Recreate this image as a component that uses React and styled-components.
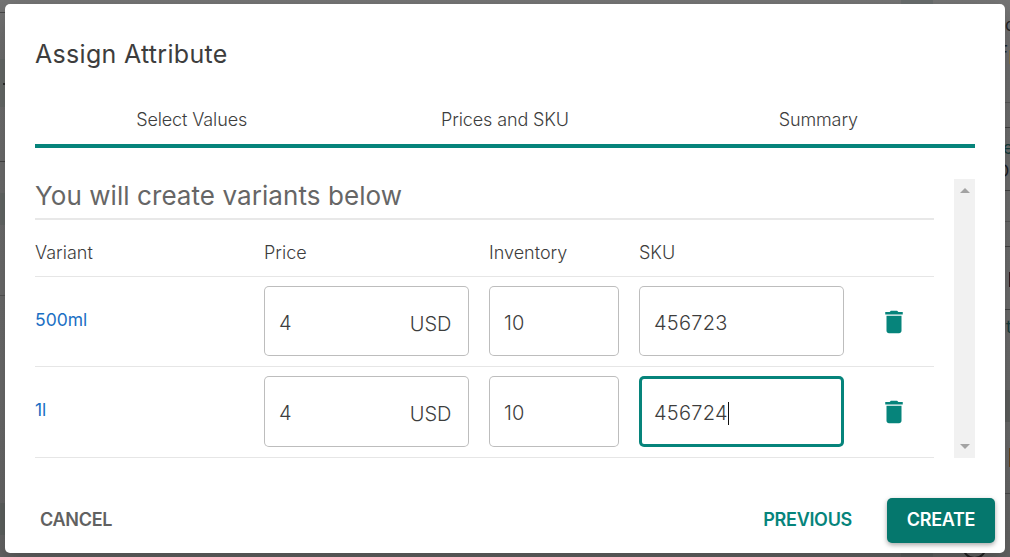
import React from "react";
import styled, { createGlobalStyle, css } from "styled-components";

const teal = "#06847b";

const GlobalStyle = createGlobalStyle`
  * { box-sizing: border-box; }
  body { margin: 0; background: #666; font-family: Inter, "Liberation Sans", sans-serif; color: #3d3d3d; overflow: hidden; }
`;

const Backdrop = styled.div`
  position: relative;
  width: 1010px;
  height: 557px;
  padding: 4px 5px;
  overflow: hidden;
  background: linear-gradient(180deg, #747474 0, #6e6e6e 60px, #6b6b6b 400px, #646464 100%);
`;
const PageBlock = styled.div`
  position: absolute;
  left: ${(p) => p.$x}px;
  top: ${(p) => p.$y}px;
  width: ${(p) => p.$w}px;
  height: ${(p) => p.$h}px;
  background: ${(p) => p.$color};
`;
const PageText = styled.span`
  position: absolute;
  left: ${(p) => p.$x}px;
  top: ${(p) => p.$y}px;
  font-size: 17px;
  line-height: 20px;
  color: ${(p) => p.$color};
`;
const PageRing = styled.div`
  position: absolute;
  left: 962px;
  top: 534px;
  width: 25px;
  height: 25px;
  border: 2px solid #222;
  border-radius: 50%;
`;
const Dialog = styled.section`
  position: relative;
  width: 1000px;
  height: 549px;
  border-radius: 5px;
  background: #fff;
  box-shadow: 0 11px 15px rgba(0, 0, 0, 0.12), 0 9px 36px rgba(0, 0, 0, 0.1);
  display: flex;
  flex-direction: column;
`;
const Title = styled.h1`
  margin: 0;
  padding: 32px 30px 0;
  height: 88px;
  font-size: 25px;
  line-height: 36px;
  font-weight: 400;
  letter-spacing: 0.3px;
`;
const Steps = styled.nav`
  display: grid;
  grid-template-columns: repeat(3, 1fr);
  margin: 0 30px;
  height: 56px;
  border-bottom: 4px solid ${teal};
`;
const Step = styled.span`
  text-align: center;
  font-size: 18px;
  line-height: 56px;
  height: 52px;
  font-weight: 300;
  letter-spacing: -0.12px;
`;
const ScrollArea = styled.div`
  display: flex;
  justify-content: space-between;
  margin: 31px 30px 0;
  height: 279px;
`;
const Content = styled.div`
  width: 899px;
`;
const Heading = styled.h2`
  margin: 0;
  height: 41px;
  border-bottom: 2px solid #e8e8e8;
  font-size: 26px;
  line-height: 34px;
  font-weight: 400;
  letter-spacing: 0.07px;
  color: #666;
`;
const Row = styled.div`
  display: grid;
  grid-template-columns: 229px 225px 150px 205px 1fr;
  height: ${(p) => p.$height}px;
  border-bottom: 1px solid #e6e6e6;
  font-size: 18px;
  font-weight: 300;
`;
const Cell = styled.div`
  padding-top: ${(p) => p.$top}px;
  line-height: 24px;
`;
const VariantLink = styled.span`
  font-weight: 400;
  color: #1a6fc4;
  font-size: 17.5px;
`;
const Field = styled.div`
  display: flex;
  justify-content: space-between;
  width: ${(p) => p.$width}px;
  height: ${(p) => p.$height}px;
  margin-top: 9px;
  padding: 2px 17.5px 0 15px;
  border-radius: 5px;
  box-shadow: inset 0 0 0 1px #bdbdbd;
  font-size: 20px;
  line-height: 70px;
  ${(p) => p.$focused && css`box-shadow: inset 0 0 0 3px ${teal};`}
`;
const Value = styled.span`
  display: flex;
  align-items: center;
  height: 70px;
  letter-spacing: 0.25px;
`;
const Caret = styled.i`
  width: 1px;
  height: 23px;
  background: #111;
`;
const Suffix = styled.span`
  padding-top: 1px;
`;
const DeleteButton = styled.span`
  display: block;
  padding: 30px 0 0 35px;
  height: 89px;
  svg { display: block; fill: ${teal}; }
`;
const ScrollTrack = styled.div`
  display: flex;
  flex-direction: column;
  align-items: center;
  justify-content: space-between;
  width: 21px;
  height: 279px;
  padding: 9px 0 9px;
  background: #f1f1f1;
`;
const Arrow = styled.i`
  width: 0;
  height: 0;
  border: solid transparent;
  border-width: 0 5px;
  ${(p) => (p.$down ? "border-top: 5px solid #a3a3a3;" : "border-bottom: 5px solid #a3a3a3;")}
`;
const Actions = styled.footer`
  display: flex;
  align-items: center;
  margin-top: 40px;
  padding: 0 10px 0 35px;
  height: 45px;
  font-size: 18px;
  font-weight: 600;
  letter-spacing: -0.3px;
`;
const TextButton = styled.span`
  color: ${(p) => p.$color};
  padding-bottom: 2px;
  margin-left: ${(p) => (p.$end ? "auto" : "0")};
  margin-right: ${(p) => (p.$end ? "35px" : "0")};
`;
const PrimaryButton = styled.span`
  width: 108px;
  height: 45px;
  border-radius: 5px;
  background: #05776d;
  color: #fff;
  line-height: 44px;
  text-align: center;
  box-shadow: 0 2px 5px rgba(0, 0, 0, 0.35);
`;

const variants = [
  { name: "500ml", sku: "456723", height: 90 },
  { name: "1l", sku: "456724", height: 91, focused: true },
];

// Parts of the dimmed page that show around the dialog: [x, y, width, height, colour]
const pageBlocks = [
  [0, 12, 5, 1, "#484848"],
  [0, 59, 5, 48, "#666a68"],
  [3, 83, 2, 2, "#2c2c2c"],
  [0, 161, 5, 1, "#454545"],
  [0, 193, 5, 32, "#646866"],
  [0, 295, 5, 1, "#555"],
  [0, 503, 5, 32, "#5d615f"],
  [901, 0, 32, 4, "#686c6c"],
  [901, 553, 32, 4, "#5c5e5e"],
  [1009, 50, 1, 14, "#84714b"],
  [1005, 102, 5, 1, "#585858"],
  [1005, 127, 5, 1, "#424242"],
  [1005, 190, 5, 1, "#424242"],
  [1005, 221, 5, 1, "#585858"],
  [1005, 246, 5, 1, "#424242"],
  [1009, 272, 1, 15, "#32181c"],
  [1005, 309, 5, 1, "#424242"],
  [1005, 390, 5, 32, "#5d5f5e"],
  [1009, 448, 1, 19, "#67431d"],
  [1005, 493, 5, 1, "#4a4a4a"],
];

function TrashIcon() {
  return (
    <svg width="30" height="30" viewBox="0 0 24 24">
      <path d="M6 19c0 1.1.9 2 2 2h8c1.1 0 2-.9 2-2V7H6v12zM19 4h-3.500l-1-1h-5l-1 1H5v2h14V4z" />
    </svg>
  );
}

export default function App() {
  return (
    <Backdrop>
      <GlobalStyle />
      {pageBlocks.map(([x, y, w, h, color]) => (
        <PageBlock key={`${x}-${y}`} $x={x} $y={y} $w={w} $h={h} $color={color} />
      ))}
      <PageText $x={1005} $y={15} $color="#262626">c</PageText>
      <PageText $x={998} $y={42} $color="#1c2429">F</PageText>
      <PageText $x={1003} $y={138} $color="#153c3b">e</PageText>
      <PageText $x={997} $y={161} $color="#1d1d24">D</PageText>
      <PageText $x={1006} $y={317} $color="#153c3b">t</PageText>
      <PageRing />
      <Dialog>
        <Title>Assign Attribute</Title>
        <Steps>
          <Step>Select Values</Step>
          <Step>Prices and SKU</Step>
          <Step>Summary</Step>
        </Steps>
        <ScrollArea>
          <Content>
            <Heading>You will create variants below</Heading>
            <Row $height={57}>
              <Cell $top={21}>Variant</Cell>
              <Cell $top={21}>Price</Cell>
              <Cell $top={21}>Inventory</Cell>
              <Cell $top={21}>SKU</Cell>
            </Row>
            {variants.map((v) => (
              <Row key={v.name} $height={v.height}>
                <Cell $top={31}><VariantLink>{v.name}</VariantLink></Cell>
                <Field $width={205} $height={v.height - 20}><Value>4</Value><Suffix>USD</Suffix></Field>
                <Field $width={130} $height={v.height - 20}><Value>10</Value></Field>
                <Field $width={205} $height={v.height - 20} $focused={v.focused}>
                  <Value>{v.sku}{v.focused && <Caret />}</Value>
                </Field>
                <DeleteButton><TrashIcon /></DeleteButton>
              </Row>
            ))}
          </Content>
          <ScrollTrack><Arrow /><Arrow $down /></ScrollTrack>
        </ScrollArea>
        <Actions>
          <TextButton $color="#616161">CANCEL</TextButton>
          <TextButton $color={teal} $end>PREVIOUS</TextButton>
          <PrimaryButton>CREATE</PrimaryButton>
        </Actions>
      </Dialog>
    </Backdrop>
  );
}
